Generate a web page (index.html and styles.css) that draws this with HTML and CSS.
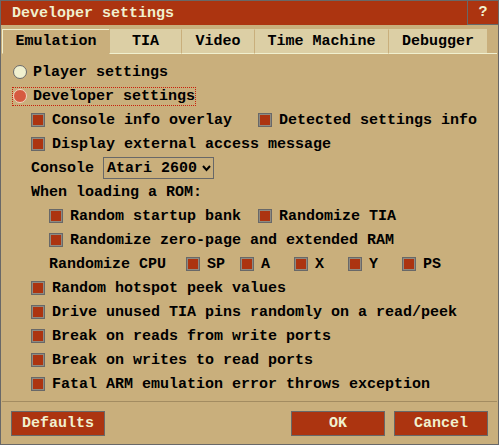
FILE: index.html
```html
<!DOCTYPE html>
<html>
<head>
<meta charset="utf-8">
<link rel="stylesheet" href="styles.css">
</head>
<body>
<div class="win">
  <div class="titlebar">
    <span class="title">Developer settings</span>
    <span class="help">?</span>
  </div>
  <div class="tabs">
    <div class="tab active t-emu">Emulation</div>
    <div class="tab t-tia">TIA</div>
    <div class="tab t-video">Video</div>
    <div class="tab t-tm">Time Machine</div>
    <div class="tab t-dbg">Debugger</div>
    <div class="tab-fill"></div>
  </div>
  <div class="content">
    <div class="row l0"><span class="rlabel"><span class="radio"></span><span>Player settings</span></span></div>
    <div class="row l0"><span class="rlabel focus"><span class="radio on"></span><span>Developer settings</span></span></div>
    <div class="row l1">
      <span class="item w227"><span class="cb"></span>Console info overlay</span>
      <span class="item"><span class="cb"></span>Detected settings info</span>
    </div>
    <div class="row l1"><span class="item"><span class="cb"></span>Display external access message</span></div>
    <div class="row l1">
      <span class="lbl">Console</span>
      <span class="select">Atari 2600<svg class="chev" width="9" height="7" viewBox="0 0 9 7"><polyline points="1,1 4.5,5 8,1" fill="none" stroke="#000" stroke-width="2"/></svg></span>
    </div>
    <div class="row l1"><span class="lbl">When loading a ROM:</span></div>
    <div class="row l2">
      <span class="item w209"><span class="cb"></span>Random startup bank</span>
      <span class="item"><span class="cb"></span>Randomize TIA</span>
    </div>
    <div class="row l2"><span class="item"><span class="cb"></span>Randomize zero-page and extended RAM</span></div>
    <div class="row l2">
      <span class="lbl w137">Randomize CPU</span>
      <span class="item w54"><span class="cb"></span>SP</span>
      <span class="item w54"><span class="cb"></span>A</span>
      <span class="item w54"><span class="cb"></span>X</span>
      <span class="item w54"><span class="cb"></span>Y</span>
      <span class="item"><span class="cb"></span>PS</span>
    </div>
    <div class="row l1"><span class="item"><span class="cb"></span>Random hotspot peek values</span></div>
    <div class="row l1"><span class="item"><span class="cb"></span>Drive unused TIA pins randomly on a read/peek</span></div>
    <div class="row l1"><span class="item"><span class="cb"></span>Break on reads from write ports</span></div>
    <div class="row l1"><span class="item"><span class="cb"></span>Break on writes to read ports</span></div>
    <div class="row l1"><span class="item"><span class="cb"></span>Fatal ARM emulation error throws exception</span></div>
  </div>
  <div class="sep"></div>
  <div class="buttons">
    <span class="btn">Defaults</span>
    <span class="spacer"></span>
    <span class="btn">OK</span>
    <span class="btn">Cancel</span>
  </div>
</div>
</body>
</html>
```

FILE: styles.css
```css
html, body {
  margin: 0;
  padding: 0;
  background: #c9af7c;
}
.win {
  box-sizing: border-box;
  width: 499px;
  height: 445px;
  border: 1px solid #686868;
  background: #c9af7c;
  font-family: "Liberation Mono", "DejaVu Sans Mono", monospace;
  font-weight: bold;
  font-size: 15px;
  color: #000;
  display: flex;
  flex-direction: column;
}
.titlebar {
  height: 24px;
  display: flex;
  align-items: stretch;
  background: #ac3410;
  color: #f0f0cf;
}
.title {
  flex: 1;
  padding-left: 11px;
  display: flex;
  align-items: center;
  letter-spacing: 0;
}
.help {
  box-sizing: border-box;
  width: 31px;
  border-left: 1px solid #686868;
  border-bottom: 1px solid #686868;
  display: flex;
  align-items: center;
  justify-content: center;
}
.tabs {
  display: flex;
  margin-top: 4px;
  margin-left: 1px;
  height: 25px;
}
.tab {
  box-sizing: border-box;
  height: 25px;
  display: flex;
  align-items: center;
  justify-content: center;
  background: #dccfa5;
  border-top: 1px solid #dccfa5;
  border-left: 1px solid #c9af7c;
  border-bottom: 1px solid #f0f0cf;
}
.tab.active {
  background: #c9af7c;
  border-top: 1px solid #f0f0cf;
  border-left: 1px solid #f0f0cf;
  border-bottom: 1px solid #c9af7c;
}
.t-emu { width: 107px; }
.t-tia { width: 72px; }
.t-video { width: 73px; }
.t-tm { width: 134px; }
.t-dbg { width: 99px; }
.tab-fill {
  flex: 1;
  margin-right: 1px;
  border-bottom: 1px solid #f0f0cf;
}
.content {
  padding-top: 6px;
  display: flex;
  flex-direction: column;
}
.row {
  height: 24px;
  display: flex;
  align-items: center;
  white-space: pre;
}
.l0 { padding-left: 11px; }
.l1 { padding-left: 30px; }
.l2 { padding-left: 48px; }
.rlabel {
  display: inline-flex;
  align-items: center;
  gap: 6px;
  height: 19px;
  padding: 0 1px 0 1px;
}
.rlabel.focus {
  outline: 1px dotted #c8200c;
  outline-offset: -1px;
}
.radio {
  box-sizing: border-box;
  width: 14px;
  height: 14px;
  border-radius: 50%;
  border: 1px solid #6a6a6a;
  background: #f0f0cf;
}
.radio.on {
  border: 1px solid #f3d7c3;
  background: #d65a40;
}
.item {
  display: inline-flex;
  align-items: center;
  gap: 7px;
}
.cb {
  box-sizing: border-box;
  width: 14px;
  height: 14px;
  border: 1px solid #686868;
  box-shadow: inset 0 0 0 1px #8f8a80;
  background: #ac3410;
  flex: none;
}
.w227 { width: 227px; }
.w209 { width: 209px; }
.w137 { width: 137px; }
.w54 { width: 54px; }
.select {
  box-sizing: border-box;
  margin-left: 9px;
  width: 111px;
  height: 22px;
  border: 1px solid #686868;
  padding-left: 3px;
  display: inline-flex;
  align-items: center;
}
.chev {
  margin-left: 5px;
}
.sep {
  height: 1px;
  background: #a38c61;
  margin: 5px 1px 0 1px;
}
.buttons {
  display: flex;
  margin-top: 9px;
  padding: 0 10px;
  gap: 9px;
}
.spacer { flex: 1; }
.btn {
  box-sizing: border-box;
  width: 94px;
  height: 25px;
  border: 1px solid #686868;
  background: #ac3410;
  color: #f0f0cf;
  display: flex;
  align-items: center;
  justify-content: center;
}
```
